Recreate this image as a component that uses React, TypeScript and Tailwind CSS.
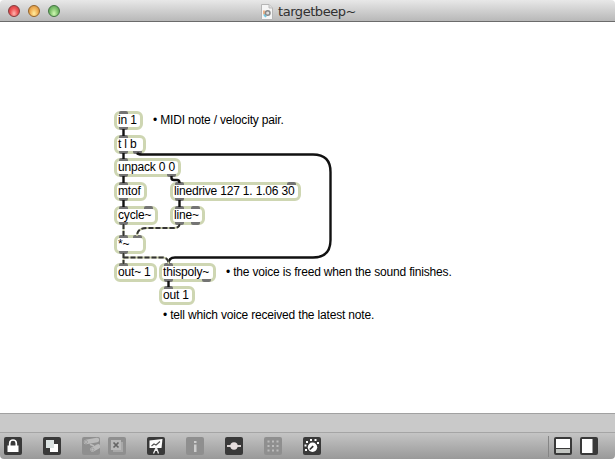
import type { ReactNode } from "react";

type PatchObject = { text: string; x: number; y: number; w: number; inlets: number[]; outlets: number[] };

const objects: PatchObject[] = [
  { text: "in 1", x: 114, y: 111, w: 29, inlets: [5], outlets: [5] },
  { text: "t l b", x: 114, y: 135, w: 32, inlets: [5], outlets: [5, 19] },
  { text: "unpack 0 0", x: 114, y: 158, w: 67, inlets: [5], outlets: [5, 53] },
  { text: "mtof", x: 114, y: 182, w: 33, inlets: [5], outlets: [5] },
  { text: "linedrive 127 1. 1.06 30", x: 170, y: 182, w: 131, inlets: [5, 117], outlets: [5] },
  { text: "cycle~", x: 114, y: 206, w: 44, inlets: [5, 30], outlets: [5] },
  { text: "line~", x: 170, y: 206, w: 35, inlets: [5, 21], outlets: [5, 21] },
  { text: "*~", x: 114, y: 235, w: 32, inlets: [5, 19], outlets: [5] },
  { text: "out~ 1", x: 114, y: 263, w: 43, inlets: [5], outlets: [] },
  { text: "thispoly~", x: 159, y: 263, w: 57, inlets: [5], outlets: [5, 43] },
  { text: "out 1", x: 159, y: 286, w: 36, inlets: [5], outlets: [] },
];

const comments = [
  { text: "• MIDI note / velocity pair.", x: 153, y: 113 },
  { text: "• the voice is freed when the sound finishes.", x: 226, y: 265 },
  { text: "• tell which voice received the latest note.", x: 163, y: 308 },
];

function Box({ o }: { o: PatchObject }) {
  return (
    <div
      className="absolute h-[19px] rounded-[6px] border-[3px] border-[#ced6b2] bg-white"
      style={{ left: o.x, top: o.y - 22, width: o.w }}
    >
      <span className="absolute top-0 left-[1px] text-[12px] leading-[13px] tracking-[-0.18px] whitespace-pre">{o.text}</span>
      {o.inlets.map((x) => (
        <i key={x} className="absolute -top-[3px] h-[3px] w-[9px] rounded-t-[2px] bg-[#747474]" style={{ left: x - 3 }} />
      ))}
      {o.outlets.map((x) => (
        <i key={x} className="absolute -bottom-[3px] h-[3px] w-[9px] rounded-b-[2px] bg-[#747474]" style={{ left: x - 3 }} />
      ))}
    </div>
  );
}

function Cords() {
  return (
    <svg className="absolute inset-0" width="615" height="391" viewBox="0 22 615 391" fill="none">
      <g stroke="#111" strokeWidth="2.4">
        <path d="M123.5 129v7M123.5 153v6M123.5 176v7M123.5 200v7M179.5 200v7M168.5 281v6" />
        <path d="M171.5 176v2q0 2 2.5 2h3q2.500 0 2.500 3" />
        <path d="M137 153q1 1.500 5 1.500H313Q330.500 154.500 330.500 172V240Q330.500 257.500 313 257.500H175Q168.500 257.500 168.500 264" />
      </g>
      <g stroke="#c3c7a4" strokeWidth="2">
        <path d="M123.500 224v12M179.500 224q0 4-6 4H147q-10 0-10 8M123.500 253v11M123.500 257.500h39q6 0 6 6.500" />
      </g>
      <g stroke="#333" strokeWidth="2" strokeDasharray="5 2">
        <path d="M123.500 224v12M179.500 224q0 4-6 4H147q-10 0-10 8M123.500 253v11M123.500 257.500h39q6 0 6 6.500" />
      </g>
    </svg>
  );
}

function Tool({ children, dim = false }: { children: ReactNode; dim?: boolean }) {
  return (
    <span className={dim ? "size-[18px] rounded-[2px] bg-[#8f8f8f]" : "size-[18px] rounded-[2px] bg-[#393939]"}>
      <svg width="18" height="18" viewBox="0 0 18 18" fill="none">{children}</svg>
    </span>
  );
}

function Toolbar() {
  return (
    <footer className="relative flex h-[27px] items-start overflow-hidden rounded-b-[4px] border-t border-[#a5a5a5] bg-linear-to-b from-[#c5c5c5] to-[#999] px-1 pt-1">
      <Tool>
        <path d="M5.700 9V6.300a3.300 3.300 0 0 1 6.600 0V9" stroke="#fff" strokeWidth="1.700" />
        <path d="M3.500 8.500h11V15h-11z" fill="#fff" />
      </Tool>
      <span className="w-[21px]" />
      <Tool>
        <path d="M7 7h8v8H7z" fill="#fff" />
        <path d="M3 3h8v8H3z" fill="#dce3e2" />
      </Tool>
      <span className="w-[21px]" />
      <Tool dim>
        <path d="M4 5 15 3" stroke="#bcbcbc" strokeWidth="4.600" strokeLinecap="round" />
        <path d="M10.500 12.500 16 9.500" stroke="#bcbcbc" strokeWidth="4.600" strokeLinecap="round" />
        <path d="M8 7.200 12 9" stroke="#bcbcbc" strokeWidth="1.500" />
        <circle cx="4" cy="5" r="1.500" stroke="#999" strokeWidth=".8" />
        <circle cx="10.500" cy="12.500" r="1.500" stroke="#999" strokeWidth=".8" />
      </Tool>
      <span className="w-2" />
      <Tool dim>
        <path d="M5 5h10v10H5z" fill="#a8a8a8" />
        <path d="M3 3h10v10H3z" fill="#b9b9b9" />
        <path d="m5.500 5.500 5 5m0-5-5 5" stroke="#646464" strokeWidth="1.700" />
      </Tool>
      <span className="w-[21px]" />
      <Tool>
        <path d="M2.500 3.500 15.500 2l-1 9H2.500z" fill="#fff" />
        <path d="m4.500 9 2.500-2 2 1 4-3.500" stroke="#555" strokeWidth="1.200" />
        <path d="M9 10v4M9 11l-2.500 5.500M9.500 11l2 5.500" stroke="#eee" strokeWidth="1.300" />
      </Tool>
      <span className="w-[21px]" />
      <Tool dim>
        <path d="M8 4h2.500v2H8zM8 7.500h2.500V15H8z" fill="#cdcdcd" />
      </Tool>
      <span className="w-[21px]" />
      <Tool>
        <path d="M2 9h14" stroke="#d8d1d1" strokeWidth="2" />
        <circle cx="9" cy="9" r="3.700" fill="#e5dddd" />
      </Tool>
      <span className="w-[21px]" />
      <Tool dim>
        <path d="M3.500 3.500h2v2h-2zm4.500 0h2v2H8zm4.500 0h2v2h-2zM3.500 8h2v2h-2zM8 8h2v2H8zm4.500 0h2v2h-2zm-9 4.500h2v2h-2zm4.500 0h2v2H8zm4.500 0h2v2h-2z" fill="#bcbcbc" />
      </Tool>
      <span className="w-[21px]" />
      <Tool>
        <circle cx="9.500" cy="10.200" r="4.700" fill="#fff" />
        <path d="m6.800 12.500 3.400-3.400" stroke="#333" strokeWidth="1.700" />
        <path d="M2 12h2v2H2zM1.500 7.500h2v2h-2zM3 4h2v2H3zM7 2h2v2H7zm4.500 0h2v2h-2zM14 5h2v2h-2z" fill="#fff" />
      </Tool>
      <span className="ml-auto -mt-[1px] mr-[5px] h-[21px] w-px bg-[#858585]" />
      <Tool>
        <path d="M2 2h14v9H2z" fill="#fff" />
        <path d="M2 12h14v4H2z" fill="#c2c5c1" />
      </Tool>
      <span className="w-2" />
      <Tool>
        <path d="M2 2h10.500v14H2z" fill="#fff" />
      </Tool>
      <span className="w-[13px]" />
    </footer>
  );
}

function Lights() {
  return (
    <div className="flex gap-2">
      <i className="size-3 rounded-full border border-[#853b3b] bg-radial-[at_50%_75%] from-[#ffb5ae] via-[#ee5556] to-[#bd3238]" />
      <i className="size-3 rounded-full border border-[#946429] bg-radial-[at_50%_75%] from-[#ffed9f] via-[#f1b359] to-[#c77f35]" />
      <i className="size-3 rounded-full border border-[#427441] bg-radial-[at_50%_75%] from-[#d1f8b3] via-[#83c570] to-[#4b9149]" />
    </div>
  );
}

export default function App() {
  return (
    <div className="flex h-[459px] w-[615px] flex-col overflow-hidden bg-white font-['Liberation_Sans',sans-serif] text-black">
      <header className="flex h-[22px] items-center rounded-t-[4px] border-b border-[#6b6b6b] bg-linear-to-b from-[#e8e8e8] to-[#b8b8b8] pl-2">
        <Lights />
        <svg className="mt-[2px] ml-[201px]" width="12" height="16" viewBox="0 0 12 16">
          <path d="M.5.500h7.500L11.500 4v11.500H.500z" fill="#f5f5f5" stroke="#b5b5b5" />
          <path d="M8 .5V4h3.500" fill="#ddd" stroke="#bbb" />
          <path d="M3 6.500v4" stroke="#efb58a" strokeWidth="2" />
          <path d="M3 10.500 5 13" stroke="#6dc9e5" strokeWidth="2" />
          <circle cx="6.700" cy="9" r="2.300" fill="#ddd" stroke="#888" strokeWidth="1.500" />
        </svg>
        <h1 className="mt-[2px] ml-[5px] font-['DejaVu_Sans',sans-serif] text-[13px] leading-[20px] tracking-[-0.45px] text-[#303030]">targetbeep~</h1>
      </header>
      <main className="relative h-[391px]">
        {objects.map((o) => <Box key={o.text} o={o} />)}
        <Cords />
        {comments.map((c) => (
          <p key={c.text} className="absolute text-[12px] leading-[14px] tracking-[-0.18px] whitespace-nowrap" style={{ left: c.x, top: c.y - 22 }}>{c.text}</p>
        ))}
      </main>
      <div className="h-[19px] border-t border-[#a1a1a1] bg-[#c9c9c9]" />
      <Toolbar />
    </div>
  );
}
